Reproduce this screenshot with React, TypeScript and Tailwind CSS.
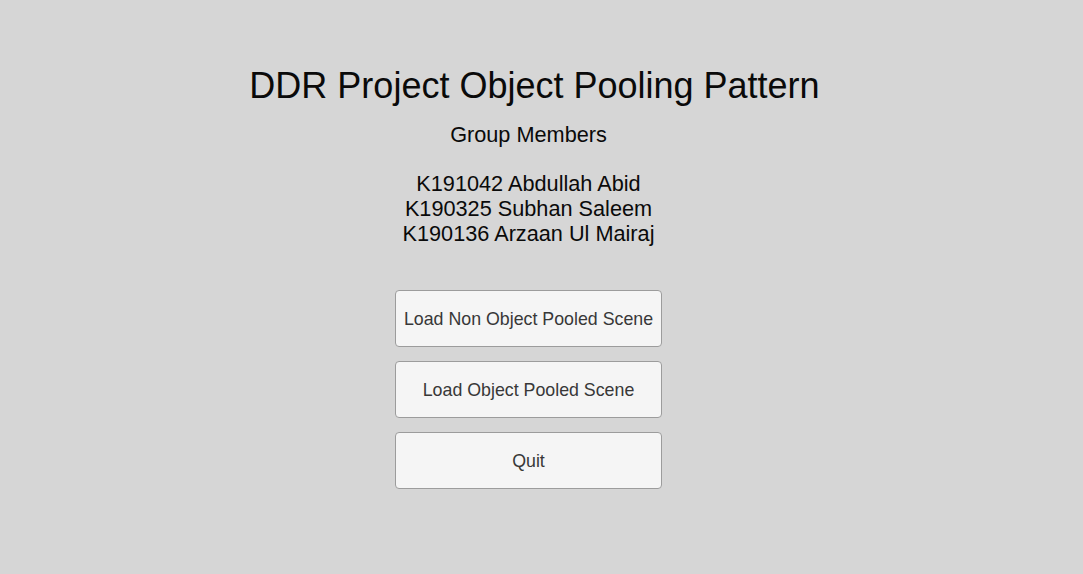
const members = [
  "K191042 Abdullah Abid",
  "K190325 Subhan Saleem",
  "K190136 Arzaan Ul Mairaj",
];

const buttons = [
  "Load Non Object Pooled Scene",
  "Load Object Pooled Scene",
  "Quit",
];

export default function App() {
  return (
    <div
      className="w-[1083px] h-[574px] bg-[#d6d6d6] overflow-hidden"
      style={{ fontFamily: '"Liberation Sans", Arial, sans-serif' }}
    >
      <div className="flex flex-col items-center pr-[26px] pt-[68px]">
        <h1 className="pl-[12px] text-[36px] leading-[36px] text-[#0a0a0a] whitespace-nowrap">
          DDR Project Object Pooling Pattern
        </h1>

        <p className="mt-[18px] text-[21.7px] leading-[25px] text-[#0a0a0a]">
          Group Members
        </p>

        <div className="mt-[24px] flex flex-col items-center text-[21.7px] leading-[25px] text-[#0a0a0a]">
          {members.map((m) => (
            <span key={m} className="whitespace-nowrap">
              {m}
            </span>
          ))}
        </div>

        <div className="mt-[44px] flex flex-col gap-[14px]">
          {buttons.map((b) => (
            <button
              key={b}
              type="button"
              className="w-[267px] h-[57px] flex items-center justify-center pt-[1px] rounded-[4px] border border-[#9c9c9c] bg-[#f5f5f5] text-[17.8px] text-[#383838] whitespace-nowrap"
            >
              {b}
            </button>
          ))}
        </div>
      </div>
    </div>
  );
}
